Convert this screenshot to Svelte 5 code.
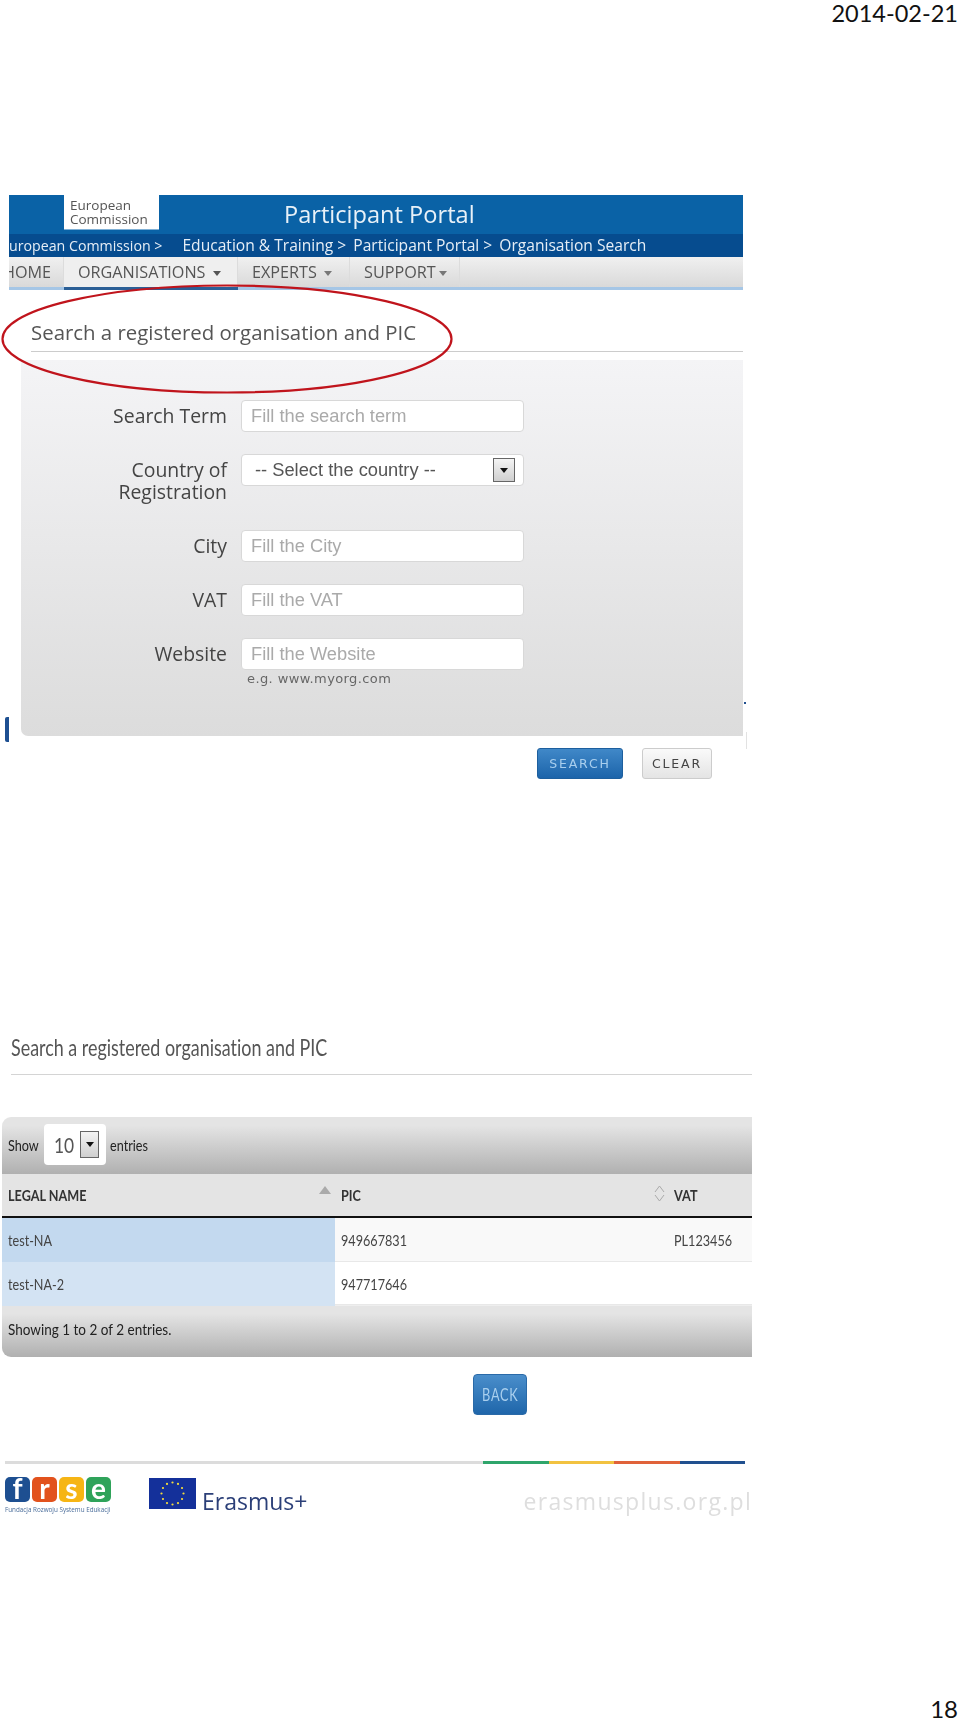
<script lang="ts">
	const FIELDS = [
		{ label: 'Search Term', placeholder: 'Fill the search term' },
		{ label: 'Country of Registration', select: '-- Select the country --' },
		{ label: 'City', placeholder: 'Fill the City' },
		{ label: 'VAT', placeholder: 'Fill the VAT' },
		{ label: 'Website', placeholder: 'Fill the Website', hint: 'e.g. www.myorg.com' }
	];
	const ROWS = [
		{ name: 'test-NA', pic: '949667831', vat: 'PL123456' },
		{ name: 'test-NA-2', pic: '947717646', vat: '' }
	];
	const TILES = [
		{ letter: 'f', color: '#1d4f91' },
		{ letter: 'r', color: '#e2521d' },
		{ letter: 's', color: '#f6b514' },
		{ letter: 'e', color: '#2fa35a' }
	];
	const STARS = Array.from({ length: 12 }, (_, i) => {
		const a = (i * Math.PI) / 6;
		return { x: 23.5 + 11 * Math.sin(a), y: 15.5 - 11 * Math.cos(a) };
	});
</script>

<div class="page">
	<div class="date">2014-02-21</div>

	<section class="portal">
		<header class="banner">
			<div class="logo">European<br />Commission</div>
			<div class="portal-name">Participant Portal</div>
		</header>
		<div class="crumbs">
			<span class="first">uropean Commission &gt;</span>
			<span>Education &amp; Training &gt;</span>
			<span>Participant Portal &gt;</span>
			<span>Organisation Search</span>
		</div>
		<nav class="nav">
			<span class="tab home">HOME</span>
			<span class="tab active">ORGANISATIONS <i class="caret"></i></span>
			<span class="tab experts">EXPERTS <i class="caret pale"></i></span>
			<span class="tab support">SUPPORT<i class="caret pale"></i></span>
		</nav>

		<h2 class="title">Search a registered organisation and PIC</h2>

		<form class="panel">
			{#each FIELDS as field}
				<div class="field" class:tall={field.select}>
					<div class="label">{field.label}</div>
					<div class="control">
						{#if field.select}
							<div class="input select">
								<span>{field.select}</span>
								<span class="drop"><i></i></span>
							</div>
						{:else}
							<div class="input placeholder">{field.placeholder}</div>
						{/if}
						{#if field.hint}<div class="hint">{field.hint}</div>{/if}
					</div>
				</div>
			{/each}
		</form>

		<div class="actions">
			<button type="button" class="btn primary">SEARCH</button>
			<button type="button" class="btn plain">CLEAR</button>
		</div>

		<svg class="ring" width="456" height="114" viewBox="0 0 456 114" aria-hidden="true">
			<ellipse cx="228" cy="56" rx="224.5" ry="53.5" fill="none" stroke="#c0141c" stroke-width="2.2" />
		</svg>

		<!-- bits of the slide footer peeking out from behind the screenshot -->
		<span class="peek peek-blue"></span>
		<span class="peek peek-dot"></span>
		<span class="peek peek-line"></span>
	</section>

	<section class="results">
		<h2 class="title2"><span class="sq">Search a registered organisation and PIC</span></h2>

		<div class="table">
			<div class="bar top">
				<span class="show"><span class="sq">Show</span></span>
				<span class="size">
					<span class="ten"><span class="sq">10</span></span>
					<span class="drop small"><i></i></span>
				</span>
				<span><span class="sq">entries</span></span>
			</div>
			<div class="row head">
				<div class="c1">
					<span class="sq">LEGAL NAME</span>
					<i class="sort-up"></i>
				</div>
				<div class="c2">
					<span class="sq">PIC</span>
					<svg class="sort-both" width="11" height="17" viewBox="0 0 11 17" aria-hidden="true">
						<path d="M1 7 5.5 1 10 7M1 10 5.5 16 10 10" fill="none" stroke="#aaa" stroke-width="1" />
					</svg>
				</div>
				<div class="c3"><span class="sq">VAT</span></div>
			</div>
			{#each ROWS as row, i}
				<div class="row body" class:odd={i === 0}>
					<div class="c1"><span class="sq">{row.name}</span></div>
					<div class="c2"><span class="sq">{row.pic}</span></div>
					<div class="c3"><span class="sq">{row.vat}</span></div>
				</div>
			{/each}
			<div class="bar bottom"><span class="sq wide">Showing 1 to 2 of 2 entries.</span></div>
		</div>

		<button type="button" class="btn back"><span>BACK</span></button>
	</section>

	<footer class="foot">
		<div class="rule">
			<span class="grey"></span>
			<span class="green"></span>
			<span class="yellow"></span>
			<span class="orange"></span>
			<span class="navy"></span>
		</div>
		<div class="brands">
			<div class="frse">
				<div class="tiles">
					{#each TILES as tile}
						<span class="tile" style:background={tile.color}>{tile.letter}</span>
					{/each}
				</div>
				<div class="frse-name">Fundacja Rozwoju Systemu Edukacji</div>
			</div>
			<svg class="flag" width="47" height="31" viewBox="0 0 47 31" aria-hidden="true">
				<rect width="47" height="31" fill="#14309a" />
				{#each STARS as star}
					<circle cx={star.x} cy={star.y} r="1.1" fill="#f5dc3c" />
				{/each}
			</svg>
			<div class="erasmus">Erasmus+</div>
			<div class="site">erasmusplus.org.pl</div>
		</div>
	</footer>

	<div class="page-no">18</div>
</div>

<style>
	:global(body) {
		margin: 0;
		background: #fff;
	}
	.page {
		position: relative;
		width: 960px;
		height: 1722px;
		overflow: hidden;
		font-family: 'Liberation Sans', Arial, sans-serif;
		color: #444;
	}
	.date {
		height: 26px;
		padding-right: 2px;
		text-align: right;
		font: 23.5px/26px Lato, sans-serif;
		color: #111;
	}

	/* top screenshot */
	.portal {
		position: relative;
		width: 734px;
		margin: 169px 0 0 9px;
		filter: blur(0.3px);
	}
	.banner {
		display: flex;
		height: 39px;
		background: #0a62a6;
	}
	.logo {
		width: 89px;
		height: 31px;
		margin-left: 55px;
		padding: 3px 0 0 6px;
		background: #fff;
		box-shadow: 0 1px 0 #7fb0d6;
		font: 13.5px/14px 'Open Sans', sans-serif;
		color: #555;
	}
	.portal-name {
		margin-left: 125px;
		font: 23.6px/39px 'Open Sans', sans-serif;
		color: #e8f1f8;
	}
	.crumbs {
		display: flex;
		gap: 7px;
		height: 23px;
		overflow: hidden;
		background: #064c8f;
		font: 15.6px/23px 'Open Sans', sans-serif;
		color: #e6eef6;
		white-space: nowrap;
	}
	.first {
		margin-right: 13px;
		font-size: 14.2px;
	}
	.nav {
		display: flex;
		height: 30px;
		border-bottom: 3px solid #a5c6e6;
		background: linear-gradient(#f0f0f0, #d9d9d9);
		font: 16.2px/30px 'Open Sans', sans-serif;
		color: #555;
	}
	.tab {
		box-sizing: border-box;
		border-right: 1px solid #dcdcdc;
		white-space: nowrap;
	}
	.home {
		width: 55px;
		overflow: hidden;
		text-indent: -6px;
	}
	.active {
		width: 174px;
		padding-left: 14px;
		background: #efefef;
		box-shadow: 0 3px 0 #2b5f96;
	}
	.experts {
		width: 112px;
		padding-left: 14px;
	}
	.support {
		width: 110px;
		padding-left: 14px;
	}
	.caret {
		display: inline-block;
		width: 0;
		height: 0;
		margin-left: 3px;
		vertical-align: 2px;
		border: 4.5px solid transparent;
		border-top: 5px solid #555;
		border-bottom: 0;
	}
	.caret.pale {
		border-top-color: #777;
	}
	.title {
		height: 62px;
		margin: 0 0 8px 22px;
		box-sizing: border-box;
		padding-top: 30px;
		border-bottom: 1px solid #ccc;
		font: 400 20.4px/24px 'Open Sans', sans-serif;
		color: #555;
	}
	.panel {
		display: flex;
		flex-direction: column;
		gap: 22px;
		height: 376px;
		box-sizing: border-box;
		margin-left: 12px;
		padding-top: 40px;
		border-radius: 0 0 0 7px;
		background: linear-gradient(#f4f4f6, #dcdcdc);
	}
	.field {
		display: flex;
		gap: 14px;
	}
	.field.tall {
		min-height: 54px;
	}
	.label {
		width: 206px;
		padding-top: 5px;
		text-align: right;
		font: 19.4px/22px 'Open Sans', sans-serif;
		color: #444;
	}
	.control {
		width: 283px;
	}
	.input {
		box-sizing: border-box;
		height: 32px;
		padding-left: 9px;
		border: 1px solid #d8d8d8;
		border-radius: 4px;
		background: #fff;
		font: 18.3px/30px 'Liberation Sans', sans-serif;
	}
	.placeholder {
		color: #aaa;
	}
	.select {
		display: flex;
		justify-content: space-between;
		padding: 0 8px 0 13px;
		color: #555;
	}
	.drop {
		display: flex;
		align-items: center;
		justify-content: center;
		box-sizing: border-box;
		width: 22px;
		height: 24px;
		margin-top: 3px;
		border: 1px solid #666;
		background: linear-gradient(#f4f4f4, #cfcfcf);
	}
	.drop i {
		width: 0;
		height: 0;
		border: 4px solid transparent;
		border-top: 5px solid #111;
		border-bottom: 0;
	}
	.hint {
		margin: 2px 0 0 6px;
		font: 13px/14px 'DejaVu Sans', sans-serif;
		letter-spacing: 0.4px;
		color: #666;
	}
	.actions {
		display: flex;
		gap: 19px;
		margin: 12px 0 0 528px;
	}
	.btn {
		height: 31px;
		padding: 0;
		border-radius: 3px;
		font: 12.5px/29px 'DejaVu Sans', sans-serif;
		letter-spacing: 1.8px;
	}
	.primary {
		width: 86px;
		border: 1px solid #1d5f9e;
		background: linear-gradient(#4088c8, #1c64aa);
		color: #a9cfee;
	}
	.plain {
		width: 70px;
		border: 1px solid #ccc;
		background: linear-gradient(#fafafa, #e4e4e4);
		color: #444;
	}
	.ring {
		position: absolute;
		left: -10px;
		top: 88px;
	}
	.peek {
		position: absolute;
		z-index: -1;
	}
	.peek-blue {
		left: -4px;
		top: 522px;
		width: 4px;
		height: 25px;
		border-radius: 2px 0 0 2px;
		background: #1d4f91;
	}
	.peek-dot {
		left: 735px;
		top: 507px;
		width: 2px;
		height: 2px;
		background: #21508f;
	}
	.peek-line {
		left: 737px;
		top: 537px;
		width: 3px;
		height: 17px;
		border-left: 1px solid #e2e2e2;
	}

	/* bottom screenshot */
	.results {
		margin: 256px 0 0 2px;
		width: 750px;
		filter: blur(0.3px);
	}
	.sq {
		display: inline-block;
		transform: scaleX(0.79);
		transform-origin: 0 50%;
		white-space: nowrap;
		font-variant-ligatures: none;
	}
	.sq.wide {
		transform: scaleX(0.845);
	}
	.title2 {
		height: 39px;
		margin: 0 0 42px 9px;
		border-bottom: 1px solid #d4d4d4;
		font: 400 22.7px/26px Lato, sans-serif;
		color: #555;
	}
	.table {
		font-family: Lato, sans-serif;
		font-size: 16px;
		color: #444;
	}
	.bar {
		display: flex;
		align-items: center;
		background: linear-gradient(#e4e4e4 15%, #b0b0b0);
		color: #222;
		padding-left: 6px;
	}
	.top {
		gap: 4px;
		box-sizing: border-box;
		height: 57px;
		padding-bottom: 3px;
		border-radius: 9px 0 0 0;
	}
	.show {
		width: 32px;
	}
	.bottom {
		height: 52px;
		padding-bottom: 6px;
		border-top: 1px solid #eee;
		box-sizing: border-box;
		border-radius: 0 0 0 9px;
	}
	.size {
		display: flex;
		align-items: center;
		box-sizing: border-box;
		width: 62px;
		height: 41px;
		padding-left: 10px;
		border-radius: 4px;
		background: #fff;
		font-size: 22px;
		color: #555;
	}
	.ten {
		width: 26px;
	}
	.drop.small {
		width: 19px;
		height: 27px;
		margin: 0;
	}
	.row {
		display: grid;
		grid-template-columns: 333px 333px 84px;
	}
	.row > div {
		padding-left: 6px;
		position: relative;
	}
	.head {
		height: 44px;
		border-bottom: 2px solid #111;
		box-sizing: border-box;
		background: #e4e4e4;
		font-weight: 700;
		line-height: 42px;
		color: #333;
	}
	.body {
		height: 43.5px;
		line-height: 44px;
		border-bottom: 1px solid #e8e8e8;
		box-sizing: border-box;
	}
	.body.odd {
		background: #f9f9f9;
	}
	.body .c1 {
		background: #d3e3f3;
	}
	.body.odd .c1 {
		background: #c3d9ef;
	}
	.sort-up {
		position: absolute;
		right: 4px;
		top: 12px;
		border: 6px solid transparent;
		border-bottom: 8px solid #aaa;
		border-top: 0;
	}
	.sort-both {
		position: absolute;
		right: 3px;
		top: 11px;
	}
	.back {
		display: block;
		width: 54px;
		height: 41px;
		margin: 17px 0 0 471px;
		border: 1px solid #2a6aa8;
		border-radius: 4px;
		background: linear-gradient(#4a8ecb, #1f66aa);
		font: 17px/39px Lato, sans-serif;
		letter-spacing: 1px;
		color: #a9cfee;
	}
	.back span {
		display: inline-block;
		transform: scaleX(0.75);
	}

	/* footer */
	.foot {
		margin: 46px 0 0 5px;
		width: 741px;
		filter: blur(0.5px);
	}
	.rule {
		display: flex;
		height: 3px;
	}
	.rule span {
		width: 65.5px;
	}
	.rule .grey {
		width: 478px;
		background: #dcdcdc;
	}
	.green {
		background: #2fa56b;
	}
	.yellow {
		background: #f2c240;
	}
	.orange {
		background: #e0623a;
	}
	.navy {
		background: #21508f;
	}
	.brands {
		position: relative;
		display: flex;
		align-items: flex-start;
		margin-top: 13px;
	}
	.tiles {
		display: flex;
		gap: 2px;
	}
	.tile {
		width: 25px;
		height: 25px;
		border-radius: 5px;
		text-align: center;
		font: 700 28px/23px Lato, sans-serif;
		color: #fff;
	}
	.frse-name {
		width: 106px;
		margin-top: 3px;
		white-space: nowrap;
		font: 6.3px/9px 'Open Sans', sans-serif;
		color: #4a6d9a;
	}
	.flag {
		margin: 1px 0 0 38px;
	}
	.erasmus {
		margin: 9px 0 0 6px;
		font: 400 23px/30px 'Open Sans', sans-serif;
		color: #2b3f78;
	}
	.site {
		margin: 9px -6px 0 auto;
		font: 23px/30px 'Open Sans', sans-serif;
		letter-spacing: 1.3px;
		color: #dedede;
	}
	.page-no {
		position: absolute;
		right: 2px;
		bottom: 0;
		font: 24px/26px Lato, sans-serif;
		color: #111;
	}
</style>
